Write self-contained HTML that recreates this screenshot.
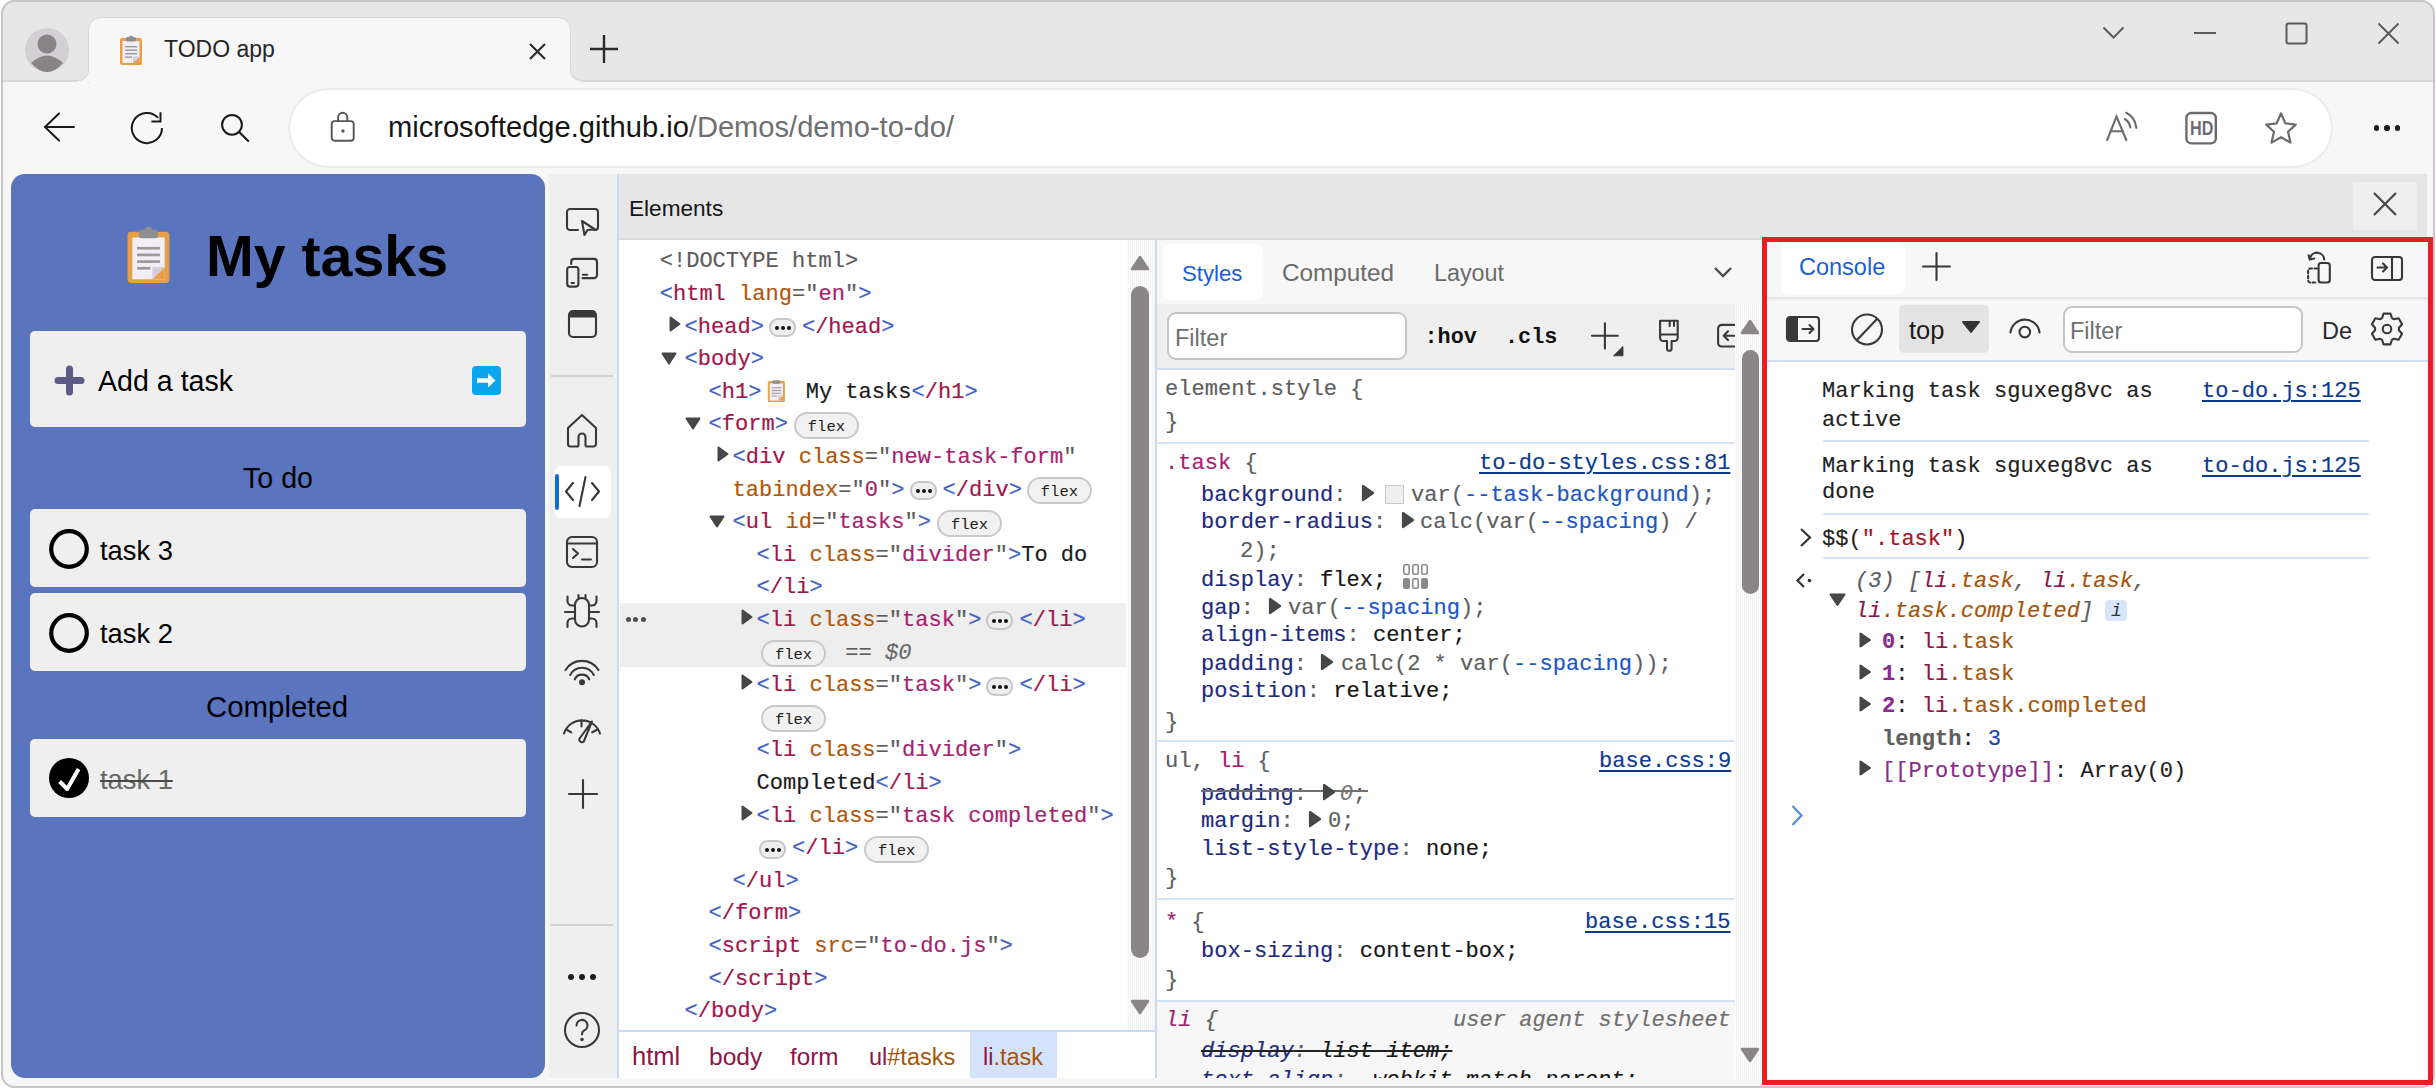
<!DOCTYPE html>
<html><head><meta charset="utf-8"><title>TODO app</title>
<style>
html,body{margin:0;padding:0;}
body{width:2436px;height:1088px;position:relative;overflow:hidden;background:#fff;font-family:"Liberation Sans",sans-serif;}
.a{position:absolute;}
.t{white-space:pre;}
.row{position:absolute;white-space:pre;font-family:"Liberation Mono",monospace;font-size:22.05px;line-height:22px;display:flex;align-items:center;height:22px;-webkit-text-stroke:0.18px currentColor;}
.tg{color:#a1154a}.br{color:#3f62c9}.at{color:#b0560a}.av{color:#a4236e}.q{color:#5c5c5c}.bk{color:#1b1b1b}
.badge{display:inline-block;box-sizing:border-box;border:2px solid #cbc7ca;background:#f1f1f1;border-radius:14px;height:27px;width:65px;position:relative;margin-left:6px;margin-right:6px;}
.badge span{-webkit-text-stroke:0;position:absolute;left:0;right:0;top:4px;text-align:center;font-size:15.5px;line-height:18px;color:#202020;font-family:"Liberation Mono",monospace;}
.ell{display:inline-block;box-sizing:border-box;border:2px solid #c9c5c8;background:#efefef;border-radius:9px;height:19px;width:27px;position:relative;margin-left:5px;margin-right:6px;}
.ell i{position:absolute;top:6px;width:4px;height:4px;border-radius:2px;background:#111;}
</style></head><body>
<div class="a" style="left:0px;top:0px;width:2436px;height:1088px;background:#fff;"></div><div class="a" style="left:1px;top:0px;width:2434px;height:1088px;box-sizing:border-box;border:2px solid #c9c6c9;border-radius:14px;background:#f7f7f7;"></div><div class="a" style="left:3px;top:2px;width:2430px;height:79px;background:#e8e7e8;border-radius:12px 12px 0 0;"></div><div class="a" style="left:3px;top:80px;width:2430px;height:2px;background:#d9d7d9;"></div><div class="a" style="left:89px;top:18px;width:481px;height:64px;background:#f7f7f7;border-radius:12px 12px 0 0;box-shadow:0 0 0 1px #dad8da;"></div><div class="a" style="left:78px;top:68px;width:11px;height:14px;background:#f7f7f7;"></div><div class="a" style="left:77px;top:66px;width:12px;height:15px;box-sizing:border-box;background:#e8e7e8;border-bottom-right-radius:11px;border-right:1.5px solid #d9d7d9;border-bottom:1.5px solid #d9d7d9;"></div><div class="a" style="left:570px;top:68px;width:11px;height:14px;background:#f7f7f7;"></div><div class="a" style="left:570px;top:66px;width:12px;height:15px;box-sizing:border-box;background:#e8e7e8;border-bottom-left-radius:11px;border-left:1.5px solid #d9d7d9;border-bottom:1.5px solid #d9d7d9;"></div><div class="a" style="left:89px;top:78px;width:481px;height:5px;background:#f7f7f7;"></div><svg class="a" style="left:25px;top:28px;" width="44" height="44" viewBox="0 0 44 44"><circle cx="22" cy="22" r="22" fill="#d2d0d4"/><circle cx="22" cy="16" r="9.5" fill="#8a8486"/><path d="M6 35 Q22 20 38 35 Q30 44 22 44 Q14 44 6 35Z" fill="#8a8486"/></svg><svg class="a" style="left:119px;top:35px;" width="24" height="31" viewBox="0 0 24 31"><rect x="1" y="3" width="22" height="27" rx="2" fill="#e8a048"/><rect x="3.5" y="6" width="17" height="22" fill="#f3eef5"/><path d="M14 28 L20.5 21.5 L20.5 28Z" fill="#e8a048"/><path d="M14 28 L14 21.5 L20.5 21.5Z" fill="#d4cfe0"/><rect x="7" y="2" width="10" height="4.5" rx="1.5" fill="#8f8f8f"/><circle cx="12" cy="2.2" r="1.8" fill="#8f8f8f"/><rect x="6" y="11" width="12" height="1.4" fill="#9a9a9a"/><rect x="6" y="14.5" width="12" height="1.4" fill="#9a9a9a"/><rect x="6" y="18" width="12" height="1.4" fill="#9a9a9a"/><rect x="6" y="21.5" width="7" height="1.4" fill="#9a9a9a"/></svg><div class="a t" style="left:164px;top:38.45px;font-family:'Liberation Sans', sans-serif;font-size:23px;line-height:23px;color:#262626;font-weight:400;font-style:normal;">TODO app</div><svg class="a" style="left:528px;top:42px;" width="19" height="19" viewBox="0 0 19 19"><path d="M2 2L17 17M17 2L2 17" stroke="#2b2b2b" stroke-width="2.2" fill="none"/></svg><svg class="a" style="left:589px;top:34px;" width="30" height="30" viewBox="0 0 30 30"><path d="M15 1V29M1 15H29" stroke="#2b2b2b" stroke-width="2.4" fill="none"/></svg><svg class="a" style="left:2102px;top:26px;" width="23" height="14" viewBox="0 0 23 14"><path d="M1.5 1.5L11.5 11.5L21.5 1.5" stroke="#5c5a5c" stroke-width="2" fill="none"/></svg><div class="a" style="left:2194px;top:32px;width:22px;height:2px;background:#5c5a5c;"></div><svg class="a" style="left:2285px;top:22px;" width="23" height="23" viewBox="0 0 23 23"><rect x="1.5" y="1.5" width="20" height="20" rx="2" stroke="#5c5a5c" stroke-width="2" fill="none"/></svg><svg class="a" style="left:2377px;top:22px;" width="23" height="23" viewBox="0 0 23 23"><path d="M1.5 1.5L21.5 21.5M21.5 1.5L1.5 21.5" stroke="#5c5a5c" stroke-width="2" fill="none"/></svg><svg class="a" style="left:41px;top:110px;" width="37" height="34" viewBox="0 0 37 34"><path d="M33 17H4.5M18 3.5L4 17L18 30.5" stroke="#1a1a1a" stroke-width="2" fill="none" stroke-linejoin="miter" stroke-linecap="round"/></svg><svg class="a" style="left:129px;top:110px;" width="37" height="36" viewBox="0 0 37 36"><path d="M33 18A15.1 15.1 0 1 1 29.1 7.9" stroke="#1a1a1a" stroke-width="2" fill="none"/><path d="M22.4 11.6H31.5V2.3" stroke="#1a1a1a" stroke-width="2" fill="none"/></svg><svg class="a" style="left:219px;top:113px;" width="32" height="32" viewBox="0 0 32 32"><circle cx="13" cy="11.8" r="9.9" stroke="#1a1a1a" stroke-width="2" fill="none"/><path d="M20.6 19.4L29.2 28" stroke="#1a1a1a" stroke-width="2.1" stroke-linecap="round"/></svg><div class="a" style="left:290px;top:90px;width:2041px;height:76px;box-sizing:border-box;background:#fff;border-radius:39px;box-shadow:0 0 0 2px #ececec;"></div><svg class="a" style="left:329px;top:110px;" width="28" height="33" viewBox="0 0 28 33"><rect x="2.7" y="11.1" width="22" height="19.6" rx="3" stroke="#555" stroke-width="1.9" fill="none"/><path d="M9.1 11.1V7.4A4.6 4.6 0 0 1 18.3 7.4V11.1" stroke="#555" stroke-width="1.9" fill="none"/><circle cx="14" cy="21" r="1.7" fill="#555"/></svg><div class="a t" style="left:388px;top:113.27px;font-family:'Liberation Sans', sans-serif;font-size:29.1px;line-height:29.1px;color:#151515;font-weight:400;font-style:normal;">microsoftedge.github.io<span style="color:#6f6f6f">/Demos/demo-to-do/</span></div><svg class="a" style="left:2104px;top:110px;" width="38" height="34" viewBox="0 0 38 34"><path d="M3.2 30L12.5 6.5L22.3 30M6.2 21.2H19" stroke="#6e6b6e" stroke-width="2.1" fill="none" stroke-linecap="round"/><path d="M20.8 9Q25.5 12 26.4 17.5" stroke="#6e6b6e" stroke-width="2.1" fill="none" stroke-linecap="round"/><path d="M22.3 2.8Q31 7 32.4 18" stroke="#6e6b6e" stroke-width="2.1" fill="none" stroke-linecap="round"/></svg><svg class="a" style="left:2184px;top:111px;" width="34" height="34" viewBox="0 0 34 34"><rect x="2.4" y="2" width="29.4" height="30.4" rx="5" stroke="#6e6b6e" stroke-width="2.4" fill="none"/><text x="0" y="23.6" text-anchor="middle" font-family="Liberation Sans" font-weight="700" font-size="19.5" fill="#6e6b6e" transform="translate(17.8 0) scale(0.83 1)">HD</text></svg><svg class="a" style="left:2262.7px;top:111px;" width="36" height="34" viewBox="0 0 36 34"><path d="M18 2.3L22.3 12.3L32.8 13.6L25 20.8L27.5 31.6L18 26.2L8.5 31.6L11 20.8L3.2 13.6L13.7 12.3Z" stroke="#6e6b6e" stroke-width="2.2" fill="none" stroke-linejoin="round"/></svg><div class="a" style="left:2373.7999999999997px;top:125.3px;width:5.6px;height:5.6px;border-radius:2.8px;background:#1c1c1c"></div><div class="a" style="left:2384.2px;top:125.3px;width:5.6px;height:5.6px;border-radius:2.8px;background:#1c1c1c"></div><div class="a" style="left:2394.6px;top:125.3px;width:5.6px;height:5.6px;border-radius:2.8px;background:#1c1c1c"></div><div class="a" style="left:11px;top:174px;width:534px;height:904px;background:#5a74be;border-radius:14px;"></div><svg class="a" style="left:125px;top:226px;" width="47" height="59" viewBox="0 0 24 31"><rect x="1" y="3" width="22" height="27" rx="2" fill="#e8a048"/><rect x="3.5" y="6" width="17" height="22" fill="#f3eef5"/><path d="M14 28 L20.5 21.5 L20.5 28Z" fill="#e8a048"/><path d="M14 28 L14 21.5 L20.5 21.5Z" fill="#d4cfe0"/><rect x="7" y="2" width="10" height="4.5" rx="1.5" fill="#8f8f8f"/><circle cx="12" cy="2.2" r="1.8" fill="#8f8f8f"/><rect x="6" y="11" width="12" height="1.4" fill="#9a9a9a"/><rect x="6" y="14.5" width="12" height="1.4" fill="#9a9a9a"/><rect x="6" y="18" width="12" height="1.4" fill="#9a9a9a"/><rect x="6" y="21.5" width="7" height="1.4" fill="#9a9a9a"/></svg><div class="a t" style="left:206px;top:227.80px;font-family:'Liberation Sans', sans-serif;font-size:57.3px;line-height:57.3px;color:#000;font-weight:700;font-style:normal;">My tasks</div><div class="a" style="left:30px;top:331px;width:496px;height:96px;background:#efefef;border-radius:5px;"></div><svg class="a" style="left:54px;top:365px;" width="31" height="31" viewBox="0 0 31 31"><path d="M15.5 4V27M4 15.5H27" stroke="#5b5b88" stroke-width="7" stroke-linecap="round"/></svg><div class="a t" style="left:98px;top:366.69px;font-family:'Liberation Sans', sans-serif;font-size:28.6px;line-height:28.6px;color:#000;font-weight:400;font-style:normal;">Add a task</div><div class="a" style="left:472px;top:366px;width:29px;height:29px;background:#0aa5ec;border-radius:4px;"></div><svg class="a" style="left:472px;top:366px;" width="29" height="29" viewBox="0 0 29 29"><path d="M5 14.5H17" stroke="#fff" stroke-width="4.5"/><path d="M16 7.5L23.5 14.5L16 21.5Z" fill="#fff"/></svg><div class="a t" style="left:243px;top:463.69px;font-family:'Liberation Sans', sans-serif;font-size:28.6px;line-height:28.6px;color:#000;font-weight:400;font-style:normal;">To do</div><div class="a" style="left:30px;top:509px;width:496px;height:78px;background:#efefef;border-radius:5px;"></div><div class="a" style="left:30px;top:593px;width:496px;height:78px;background:#efefef;border-radius:5px;"></div><svg class="a" style="left:49px;top:529px;" width="40" height="40" viewBox="0 0 40 40"><circle cx="20" cy="20" r="17.8" stroke="#000" stroke-width="4.2" fill="none"/></svg><div class="a t" style="left:100px;top:537.29px;font-family:'Liberation Sans', sans-serif;font-size:27.3px;line-height:27.3px;color:#000;font-weight:400;font-style:normal;">task 3</div><svg class="a" style="left:49px;top:613px;" width="40" height="40" viewBox="0 0 40 40"><circle cx="20" cy="20" r="17.8" stroke="#000" stroke-width="4.2" fill="none"/></svg><div class="a t" style="left:100px;top:620.29px;font-family:'Liberation Sans', sans-serif;font-size:27.3px;line-height:27.3px;color:#000;font-weight:400;font-style:normal;">task 2</div><div class="a t" style="left:206px;top:692.01px;font-family:'Liberation Sans', sans-serif;font-size:29.4px;line-height:29.4px;color:#000;font-weight:400;font-style:normal;">Completed</div><div class="a" style="left:30px;top:739px;width:496px;height:78px;background:#efefef;border-radius:5px;"></div><svg class="a" style="left:49px;top:758px;" width="40" height="40" viewBox="0 0 40 40"><circle cx="20" cy="20" r="20" fill="#000"/><path d="M10.6 23.5L18.2 31L29.6 11" stroke="#fff" stroke-width="4" fill="none" stroke-linejoin="round"/></svg><div class="a t" style="left:100px;top:766.29px;font-family:'Liberation Sans', sans-serif;font-size:27.3px;line-height:27.3px;color:#6a6a6a;font-weight:400;font-style:normal;"><span style="text-decoration:line-through;text-decoration-thickness:2px;text-decoration-color:#4a4a4a">task 1</span></div><div class="a" style="left:549px;top:174px;width:68px;height:904px;background:#efefef;"></div><div class="a" style="left:617px;top:174px;width:2px;height:904px;background:#c9daf4;"></div><svg class="a" style="left:565px;top:207px;" width="35" height="30" viewBox="0 0 35 30"><path d="M13 23H5A3 3 0 0 1 2 20V5A3 3 0 0 1 5 2H30A3 3 0 0 1 33 5V20A3 3 0 0 1 30 23" stroke="#383838" stroke-width="2.1" fill="none" stroke-linecap="round" stroke-linejoin="round"/><path d="M17 14L19.5 28L22.5 23L30 22.5Z" stroke="#383838" stroke-width="2.1" fill="none" stroke-linecap="round" stroke-linejoin="round"/></svg><svg class="a" style="left:565px;top:257px;" width="35" height="32" viewBox="0 0 35 32"><path d="M6.2 7V4.9A3 3 0 0 1 9.2 1.9H29A3 3 0 0 1 32 4.9V18.1A3 3 0 0 1 29 21.1H17.5" stroke="#383838" stroke-width="2.1" fill="none" stroke-linecap="round" stroke-linejoin="round"/><rect x="2.2" y="10" width="11.2" height="19.6" rx="2.5" stroke="#383838" stroke-width="2.1" fill="none" stroke-linecap="round" stroke-linejoin="round"/><path d="M6.6 26H9M18 17.7H22.2" stroke="#383838" stroke-width="2.1" fill="none" stroke-linecap="round" stroke-linejoin="round"/></svg><svg class="a" style="left:567px;top:309px;" width="31" height="30" viewBox="0 0 31 30"><rect x="2" y="2" width="27" height="26" rx="4" stroke="#383838" stroke-width="2.1" fill="none" stroke-linecap="round" stroke-linejoin="round"/><path d="M3 4.5A3 3 0 0 1 6 2.5H25A3 3 0 0 1 28 4.5V8.5H3Z" fill="#383838"/></svg><div class="a" style="left:551px;top:375px;width:62px;height:2px;background:#d0d0d0;"></div><svg class="a" style="left:565px;top:413px;" width="34" height="35" viewBox="0 0 34 35"><path d="M3 15L17 2L31 15V31A2.5 2.5 0 0 1 28.5 33.5H22A1.5 1.5 0 0 1 20.5 32V24A3.5 3.5 0 0 0 13.5 24V32A1.5 1.5 0 0 1 12 33.5H5.5A2.5 2.5 0 0 1 3 31Z" stroke="#383838" stroke-width="2.1" fill="none" stroke-linecap="round" stroke-linejoin="round"/></svg><div class="a" style="left:555px;top:466px;width:56px;height:52px;background:#fff;border-radius:6px;"></div><div class="a" style="left:555px;top:474px;width:4px;height:36px;background:#0f6cd1;border-radius:2px;"></div><svg class="a" style="left:563px;top:474px;" width="39" height="35" viewBox="0 0 39 35"><path d="M10 9L3 17.5L10 26M29 9L36 17.5L29 26M22.5 3L16.5 32" stroke="#383838" stroke-width="2.1" fill="none" stroke-linecap="round" stroke-linejoin="round"/></svg><svg class="a" style="left:565px;top:535px;" width="34" height="34" viewBox="0 0 34 34"><rect x="2" y="2" width="30" height="30" rx="5" stroke="#383838" stroke-width="2.1" fill="none" stroke-linecap="round" stroke-linejoin="round"/><path d="M2.5 8.5H31.5M8 14L13 18.5L8 23M17 24.5H26" stroke="#383838" stroke-width="2.1" fill="none" stroke-linecap="round" stroke-linejoin="round"/></svg><svg class="a" style="left:560px;top:590px;" width="44" height="42" viewBox="0 0 44 42"><rect x="15" y="8" width="14" height="28.5" rx="7" stroke="#383838" stroke-width="2.1" fill="none" stroke-linecap="round" stroke-linejoin="round"/><path d="M18.5 8V5M25.5 8V5M15 22H5M29 22H39M15 15.5H12A4.5 4.5 0 0 1 7.5 11V6.5M29 15.5H32A4.5 4.5 0 0 0 36.5 11V6.5M15 28.5H12A4.5 4.5 0 0 0 7.5 33V37M29 28.5H32A4.5 4.5 0 0 1 36.5 33V37" stroke="#383838" stroke-width="2.1" fill="none" stroke-linecap="round" stroke-linejoin="round"/></svg><svg class="a" style="left:560px;top:655px;" width="44" height="34" viewBox="0 0 44 34"><path d="M5.5 15A19.5 19.5 0 0 1 38.5 15M10.2 20A13.2 13.2 0 0 1 33.8 20M14.8 24.4A7.8 7.8 0 0 1 29.2 24.4" stroke="#383838" stroke-width="2.1" fill="none" stroke-linecap="round" stroke-linejoin="round"/><circle cx="22" cy="27.2" r="3" fill="#383838"/></svg><svg class="a" style="left:560px;top:715px;" width="44" height="32" viewBox="0 0 44 32"><path d="M4 18.5A18.9 18.9 0 0 1 40 18.5M21.5 5V11.5M6.5 14.5L11.2 17.3M37.5 14.5L32.2 17.3" stroke="#383838" stroke-width="2.1" fill="none" stroke-linecap="round" stroke-linejoin="round"/><path d="M31.9 6.5L19.2 24A2.8 2.8 0 0 0 23.8 26.5Z" stroke="#383838" stroke-width="2.1" fill="none" stroke-linecap="round" stroke-linejoin="round"/></svg><svg class="a" style="left:567px;top:778px;" width="32" height="32" viewBox="0 0 32 32"><path d="M16 2V30M2 16H30" stroke="#383838" stroke-width="2.1" fill="none" stroke-linecap="round" stroke-linejoin="round"/></svg><div class="a" style="left:551px;top:924px;width:62px;height:2px;background:#d0d0d0;"></div><div class="a" style="left:568px;top:974px;width:6px;height:6px;border-radius:3px;background:#1e1e1e"></div><div class="a" style="left:579px;top:974px;width:6px;height:6px;border-radius:3px;background:#1e1e1e"></div><div class="a" style="left:590px;top:974px;width:6px;height:6px;border-radius:3px;background:#1e1e1e"></div><svg class="a" style="left:563px;top:1011px;" width="38" height="38" viewBox="0 0 38 38"><circle cx="19" cy="19" r="17" stroke="#383838" stroke-width="2.1" fill="none" stroke-linecap="round" stroke-linejoin="round"/><path d="M13.5 14.5A5.5 5.5 0 1 1 21 19.5C19.5 20.5 19 21.5 19 23.5" stroke="#383838" stroke-width="2.1" fill="none" stroke-linecap="round" stroke-linejoin="round"/><circle cx="19" cy="28.5" r="1.8" fill="#383838"/></svg><div class="a" style="left:619px;top:174px;width:1808px;height:64px;background:#e6e6e6;"></div><div class="a" style="left:619px;top:238px;width:1808px;height:2px;background:#dcdcdc;"></div><div class="a t" style="left:629px;top:197.59px;font-family:'Liberation Sans', sans-serif;font-size:22.6px;line-height:22.6px;color:#161616;font-weight:400;font-style:normal;">Elements</div><div class="a" style="left:2353px;top:182px;width:64px;height:48px;background:#efefef;"></div><svg class="a" style="left:2372px;top:191px;" width="26" height="26" viewBox="0 0 26 26"><path d="M2 2L24 24M24 2L2 24" stroke="#4a4a4a" stroke-width="2.3"/></svg><div class="a" style="left:619px;top:240px;width:508px;height:790px;background:#fff;"></div><div class="a" style="left:620px;top:603px;width:506px;height:64px;background:#eeeeee;"></div><div class="a" style="left:625.5px;top:616.5px;width:5px;height:5px;border-radius:2.5px;background:#505050"></div><div class="a" style="left:633.0px;top:616.5px;width:5px;height:5px;border-radius:2.5px;background:#505050"></div><div class="a" style="left:640.5px;top:616.5px;width:5px;height:5px;border-radius:2.5px;background:#505050"></div><div class="row" style="left:659.7px;top:251.34px;"><span class="q">&lt;!DOCTYPE html&gt;</span></div><div class="row" style="left:659.7px;top:283.94px;"><span class="br">&lt;</span><span class="tg">html</span><span class="bk"> </span><span class="at">lang</span><span class="q">="</span><span class="av">en</span><span class="q">"</span><span class="br">&gt;</span></div><svg class="a" style="left:669px;top:315.8px;" width="12" height="16" viewBox="0 0 12 16"><path d="M1.5 1.5L10.5 8L1.5 14.5Z" fill="#474747" stroke="#474747" stroke-width="2" stroke-linejoin="round"/></svg><div class="row" style="left:684.5px;top:316.54px;"><span class="br">&lt;</span><span class="tg">head</span><span class="br">&gt;</span><span class="ell"><i style="left:4px"></i><i style="left:10px"></i><i style="left:16px"></i></span><span class="br">&lt;</span><span class="tg">/head</span><span class="br">&gt;</span></div><svg class="a" style="left:661px;top:351.90000000000003px;" width="16" height="13" viewBox="0 0 16 13"><path d="M1.5 1.5H14.5L8 11.5Z" fill="#474747" stroke="#474747" stroke-width="2" stroke-linejoin="round"/></svg><div class="row" style="left:684.5px;top:349.14px;"><span class="br">&lt;</span><span class="tg">body</span><span class="br">&gt;</span></div><div class="row" style="left:708.5px;top:381.74px;"><span class="br">&lt;</span><span class="tg">h1</span><span class="br">&gt;</span><svg width="31" height="24" viewBox="0 0 31 24" style="position:relative;top:-2px"><g transform="translate(6,-0.3) scale(0.78)"><rect x="1" y="3" width="22" height="27" rx="2" fill="#e8a048"/><rect x="3.5" y="6" width="17" height="22" fill="#f3eef5"/><path d="M14 28 L20.5 21.5 L20.5 28Z" fill="#e8a048"/><path d="M14 28 L14 21.5 L20.5 21.5Z" fill="#d4cfe0"/><rect x="7" y="2" width="10" height="4.5" rx="1.5" fill="#8f8f8f"/><rect x="6" y="11" width="12" height="1.4" fill="#9a9a9a"/><rect x="6" y="14.5" width="12" height="1.4" fill="#9a9a9a"/><rect x="6" y="18" width="12" height="1.4" fill="#9a9a9a"/><rect x="6" y="21.5" width="7" height="1.4" fill="#9a9a9a"/></g></svg><span class="bk"> My tasks</span><span class="br">&lt;</span><span class="tg">/h1</span><span class="br">&gt;</span></div><svg class="a" style="left:685px;top:417.1px;" width="16" height="13" viewBox="0 0 16 13"><path d="M1.5 1.5H14.5L8 11.5Z" fill="#474747" stroke="#474747" stroke-width="2" stroke-linejoin="round"/></svg><div class="row" style="left:708.5px;top:414.34px;"><span class="br">&lt;</span><span class="tg">form</span><span class="br">&gt;</span><span class="badge" style="margin-left:6px"><span>flex</span></span></div><svg class="a" style="left:717px;top:446.20000000000005px;" width="12" height="16" viewBox="0 0 12 16"><path d="M1.5 1.5L10.5 8L1.5 14.5Z" fill="#474747" stroke="#474747" stroke-width="2" stroke-linejoin="round"/></svg><div class="row" style="left:732.5px;top:446.94px;"><span class="br">&lt;</span><span class="tg">div</span><span class="bk"> </span><span class="at">class</span><span class="q">="</span><span class="av">new-task-form</span><span class="q">"</span></div><div class="row" style="left:732.5px;top:479.54px;"><span class="at">tabindex</span><span class="q">="</span><span class="av">0</span><span class="q">"</span><span class="br">&gt;</span><span class="ell"><i style="left:4px"></i><i style="left:10px"></i><i style="left:16px"></i></span><span class="br">&lt;</span><span class="tg">/div</span><span class="br">&gt;</span><span class="badge" style="margin-left:5px"><span>flex</span></span></div><svg class="a" style="left:709px;top:514.9000000000001px;" width="16" height="13" viewBox="0 0 16 13"><path d="M1.5 1.5H14.5L8 11.5Z" fill="#474747" stroke="#474747" stroke-width="2" stroke-linejoin="round"/></svg><div class="row" style="left:732.5px;top:512.14px;"><span class="br">&lt;</span><span class="tg">ul</span><span class="bk"> </span><span class="at">id</span><span class="q">="</span><span class="av">tasks</span><span class="q">"</span><span class="br">&gt;</span><span class="badge" style="margin-left:6px"><span>flex</span></span></div><div class="row" style="left:756.5px;top:544.74px;"><span class="br">&lt;</span><span class="tg">li</span><span class="bk"> </span><span class="at">class</span><span class="q">="</span><span class="av">divider</span><span class="q">"</span><span class="br">&gt;</span><span class="bk">To do</span></div><div class="row" style="left:756.5px;top:577.34px;"><span class="br">&lt;</span><span class="tg">/li</span><span class="br">&gt;</span></div><svg class="a" style="left:741px;top:609.2px;" width="12" height="16" viewBox="0 0 12 16"><path d="M1.5 1.5L10.5 8L1.5 14.5Z" fill="#474747" stroke="#474747" stroke-width="2" stroke-linejoin="round"/></svg><div class="row" style="left:756.5px;top:609.94px;"><span class="br">&lt;</span><span class="tg">li</span><span class="bk"> </span><span class="at">class</span><span class="q">="</span><span class="av">task</span><span class="q">"</span><span class="br">&gt;</span><span class="ell"><i style="left:4px"></i><i style="left:10px"></i><i style="left:16px"></i></span><span class="br">&lt;</span><span class="tg">/li</span><span class="br">&gt;</span></div><div class="row" style="left:761px;top:642.54px;"><span class="badge" style="margin-left:0px"><span>flex</span></span><span class="q"> == </span><span style="color:#6a6a6a;font-style:italic">$0</span></div><svg class="a" style="left:741px;top:674.4000000000001px;" width="12" height="16" viewBox="0 0 12 16"><path d="M1.5 1.5L10.5 8L1.5 14.5Z" fill="#474747" stroke="#474747" stroke-width="2" stroke-linejoin="round"/></svg><div class="row" style="left:756.5px;top:675.14px;"><span class="br">&lt;</span><span class="tg">li</span><span class="bk"> </span><span class="at">class</span><span class="q">="</span><span class="av">task</span><span class="q">"</span><span class="br">&gt;</span><span class="ell"><i style="left:4px"></i><i style="left:10px"></i><i style="left:16px"></i></span><span class="br">&lt;</span><span class="tg">/li</span><span class="br">&gt;</span></div><div class="row" style="left:761px;top:707.74px;"><span class="badge" style="margin-left:0px"><span>flex</span></span></div><div class="row" style="left:756.5px;top:740.34px;"><span class="br">&lt;</span><span class="tg">li</span><span class="bk"> </span><span class="at">class</span><span class="q">="</span><span class="av">divider</span><span class="q">"</span><span class="br">&gt;</span></div><div class="row" style="left:756.5px;top:772.94px;"><span class="bk">Completed</span><span class="br">&lt;</span><span class="tg">/li</span><span class="br">&gt;</span></div><svg class="a" style="left:741px;top:804.8000000000001px;" width="12" height="16" viewBox="0 0 12 16"><path d="M1.5 1.5L10.5 8L1.5 14.5Z" fill="#474747" stroke="#474747" stroke-width="2" stroke-linejoin="round"/></svg><div class="row" style="left:756.5px;top:805.54px;"><span class="br">&lt;</span><span class="tg">li</span><span class="bk"> </span><span class="at">class</span><span class="q">="</span><span class="av">task completed</span><span class="q">"</span><span class="br">&gt;</span></div><div class="row" style="left:759px;top:838.14px;"><span class="ell" style="margin-left:0"><i style="left:4px"></i><i style="left:10px"></i><i style="left:16px"></i></span><span class="br">&lt;</span><span class="tg">/li</span><span class="br">&gt;</span><span class="badge" style="margin-left:6px"><span>flex</span></span></div><div class="row" style="left:732.5px;top:870.74px;"><span class="br">&lt;</span><span class="tg">/ul</span><span class="br">&gt;</span></div><div class="row" style="left:708.5px;top:903.34px;"><span class="br">&lt;</span><span class="tg">/form</span><span class="br">&gt;</span></div><div class="row" style="left:708.5px;top:935.94px;"><span class="br">&lt;</span><span class="tg">script</span><span class="bk"> </span><span class="at">src</span><span class="q">="</span><span class="av">to-do.js</span><span class="q">"</span><span class="br">&gt;</span></div><div class="row" style="left:708.5px;top:968.54px;"><span class="br">&lt;</span><span class="tg">/script</span><span class="br">&gt;</span></div><div class="row" style="left:684.5px;top:1001.14px;"><span class="br">&lt;</span><span class="tg">/body</span><span class="br">&gt;</span></div><div class="a" style="left:1127px;top:240px;width:28px;height:790px;background:repeating-linear-gradient(90deg,#fcfcfc 0 1px,#f3f3f3 1px 2px);"></div><svg class="a" style="left:1130px;top:255px;" width="20" height="16" viewBox="0 0 20 16"><path d="M10 2L18 14H2Z" fill="#8a8587" stroke="#8a8587" stroke-width="2.5" stroke-linejoin="round"/></svg><div class="a" style="left:1131px;top:286px;width:18px;height:672px;background:#8a8587;border-radius:9px;"></div><svg class="a" style="left:1130px;top:999px;" width="20" height="16" viewBox="0 0 20 16"><path d="M10 14L18 2H2Z" fill="#8a8587" stroke="#8a8587" stroke-width="2.5" stroke-linejoin="round"/></svg><div class="a" style="left:1155px;top:240px;width:2px;height:838px;background:#c9daf4;"></div><div class="a" style="left:619px;top:1030px;width:536px;height:2px;background:#c9daf4;"></div><div class="a" style="left:619px;top:1032px;width:536px;height:46px;background:#fff;"></div><div class="a" style="left:970px;top:1032px;width:87px;height:46px;background:#d3e3fb;"></div><div class="a t" style="left:632px;top:1043.83px;font-family:'Liberation Sans', sans-serif;font-size:25.5px;line-height:25.5px;color:#8c1547;font-weight:400;font-style:normal;">html</div><div class="a t" style="left:709px;top:1044.59px;font-family:'Liberation Sans', sans-serif;font-size:24.6px;line-height:24.6px;color:#8c1547;font-weight:400;font-style:normal;">body</div><div class="a t" style="left:790px;top:1044.85px;font-family:'Liberation Sans', sans-serif;font-size:24.3px;line-height:24.3px;color:#8c1547;font-weight:400;font-style:normal;">form</div><div class="a t" style="left:869px;top:1045.53px;font-family:'Liberation Sans', sans-serif;font-size:23.5px;line-height:23.5px;color:#8c1547;font-weight:400;font-style:normal;">ul<span style="color:#a6540a">#tasks</span></div><div class="a t" style="left:983px;top:1045.53px;font-family:'Liberation Sans', sans-serif;font-size:23.5px;line-height:23.5px;color:#8c1547;font-weight:400;font-style:normal;">li<span style="color:#a6540a">.task</span></div><div class="a" style="left:1157px;top:240px;width:605px;height:64px;background:#f7f7f7;"></div><div class="a" style="left:1163px;top:244px;width:100px;height:56px;background:#fff;border-radius:8px;"></div><div class="a t" style="left:1182px;top:263.13px;font-family:'Liberation Sans', sans-serif;font-size:22.2px;line-height:22.2px;color:#1a5fd6;font-weight:400;font-style:normal;">Styles</div><div class="a t" style="left:1282px;top:261.35px;font-family:'Liberation Sans', sans-serif;font-size:24.3px;line-height:24.3px;color:#6b6b6b;font-weight:400;font-style:normal;">Computed</div><div class="a t" style="left:1434px;top:262.19px;font-family:'Liberation Sans', sans-serif;font-size:23.3px;line-height:23.3px;color:#6b6b6b;font-weight:400;font-style:normal;">Layout</div><svg class="a" style="left:1713px;top:266px;" width="20" height="14" viewBox="0 0 20 14"><path d="M2 2L10 10L18 2" stroke="#4a4a4a" stroke-width="2.3" fill="none"/></svg><div class="a" style="left:1157px;top:304px;width:578px;height:64px;background:#efefef;"></div><div class="a" style="left:1167px;top:312px;width:240px;height:48px;box-sizing:border-box;background:#fff;border:2px solid #c8c3c6;border-radius:9px;"></div><div class="a t" style="left:1175px;top:327.02px;font-family:'Liberation Sans', sans-serif;font-size:23.5px;line-height:23.5px;color:#6f6f6f;font-weight:400;font-style:normal;">Filter</div><div class="a t" style="left:1424.5px;top:327.43px;font-family:'Liberation Mono', monospace;font-size:21.8px;line-height:21.8px;color:#111;font-weight:700;font-style:normal;">:hov</div><div class="a t" style="left:1505px;top:327.43px;font-family:'Liberation Mono', monospace;font-size:21.8px;line-height:21.8px;color:#111;font-weight:700;font-style:normal;">.cls</div><svg class="a" style="left:1589px;top:318px;" width="36" height="40" viewBox="0 0 36 40"><path d="M15.9 5.3V30.6M3 17.7H28.8" stroke="#383838" stroke-width="2.1" fill="none" stroke-linecap="round" stroke-linejoin="round"/><path d="M34 28.4V37.8H24.5Z" fill="#383838" stroke="#383838" stroke-width="0.8" stroke-linejoin="round"/></svg><svg class="a" style="left:1655px;top:316px;" width="28" height="38" viewBox="0 0 28 38"><path d="M5.1 4.7H22.7V22A3 3 0 0 1 19.7 25H16.6V32.5A2.3 2.3 0 0 1 12 32.5V25H8.1A3 3 0 0 1 5.1 22Z M5.1 18.5H22.7 M14.7 5V10 M19 5V10" stroke="#383838" stroke-width="2.1" fill="none" stroke-linecap="round" stroke-linejoin="round"/></svg><svg class="a" style="left:1714px;top:318px;" width="21" height="34" viewBox="0 0 21 34"><path d="M21 6.9H7.6A3.5 3.5 0 0 0 4.1 10.4V25A3.5 3.5 0 0 0 7.6 28.5H21 M9.7 17.7H21 M14 13.3L9.7 17.7L14 22.1" stroke="#383838" stroke-width="2.1" fill="none" stroke-linecap="round" stroke-linejoin="round"/></svg><div class="a" style="left:1157px;top:368px;width:578px;height:2px;background:#cfdff6;"></div><div class="a" style="left:1735px;top:304px;width:27px;height:774px;background:repeating-linear-gradient(90deg,#fcfcfc 0 1px,#f3f3f3 1px 2px);"></div><svg class="a" style="left:1740px;top:319px;" width="20" height="16" viewBox="0 0 20 16"><path d="M10 2L18 14H2Z" fill="#8a8587" stroke="#8a8587" stroke-width="2.5" stroke-linejoin="round"/></svg><div class="a" style="left:1742px;top:350px;width:17px;height:244px;background:#8a8587;border-radius:8.5px;"></div><svg class="a" style="left:1740px;top:1047px;" width="20" height="16" viewBox="0 0 20 16"><path d="M10 14L18 2H2Z" fill="#8a8587" stroke="#8a8587" stroke-width="2.5" stroke-linejoin="round"/></svg><div class="a" style="left:1157px;top:370px;width:578px;height:708px;background:#fff;"></div><div class="row" style="left:1165px;top:378.54px;"><span style="color:#5e5e5e">element.style {</span></div><div class="row" style="left:1165px;top:411.94px;"><span style="color:#5e5e5e">}</span></div><div class="a" style="left:1157px;top:442px;width:578px;height:2px;background:#d3e2f7;"></div><div class="row" style="left:1165px;top:452.84px;"><span style="color:#a4236e">.task</span><span style="color:#5e5e5e"> {</span></div><div class="row" style="left:1479px;top:452.84px;"><span style="color:#0d3a8f;text-decoration:underline;text-underline-offset:3px;text-decoration-thickness:2px">to-do-styles.css:81</span></div><div class="row" style="left:1201px;top:484.74px;"><span style="color:#1d2a7e">background</span><span style="color:#5e5e5e">: </span></div><svg class="a" style="left:1360.5px;top:484.0px;" width="14" height="18" viewBox="0 0 14 18"><path d="M2 2L12 9L2 16Z" fill="#474747" stroke="#474747" stroke-width="2.2" stroke-linejoin="round"/></svg><div class="a" style="left:1385px;top:485px;width:19px;height:19px;box-sizing:border-box;background:#efefef;border:1.5px solid #c9c9c9;"></div><div class="row" style="left:1411px;top:484.74px;"><span style="color:#5e5e5e">var(</span><span style="color:#1a56c8">--task-background</span><span style="color:#5e5e5e">);</span></div><div class="row" style="left:1201px;top:512.04px;"><span style="color:#1d2a7e">border-radius</span><span style="color:#5e5e5e">: </span></div><svg class="a" style="left:1400.5px;top:511.29999999999995px;" width="14" height="18" viewBox="0 0 14 18"><path d="M2 2L12 9L2 16Z" fill="#474747" stroke="#474747" stroke-width="2.2" stroke-linejoin="round"/></svg><div class="row" style="left:1420px;top:512.04px;"><span style="color:#5e5e5e">calc(var(</span><span style="color:#1a56c8">--spacing</span><span style="color:#5e5e5e">) /</span></div><div class="row" style="left:1240px;top:540.74px;"><span style="color:#5e5e5e">2);</span></div><div class="row" style="left:1201px;top:569.54px;"><span style="color:#1d2a7e">display</span><span style="color:#5e5e5e">: </span><span style="color:#151515">flex;</span></div><svg class="a" style="left:1402px;top:563px;" width="27" height="27" viewBox="0 0 27 27"><g fill="none" stroke="#8a8a8a" stroke-width="1.6"><rect x="1.8" y="1.8" width="5.4" height="9.4" rx="1.5"/><rect x="10.8" y="1.8" width="5.4" height="9.4" rx="1.5"/><rect x="19.8" y="1.8" width="5.4" height="9.4" rx="1.5"/><rect x="10.8" y="15.8" width="5.4" height="9.4" rx="1.5"/></g><g fill="#8a8a8a"><rect x="1" y="15" width="7" height="11" rx="2"/><rect x="19" y="15" width="7" height="11" rx="2"/></g></svg><div class="row" style="left:1201px;top:597.84px;"><span style="color:#1d2a7e">gap</span><span style="color:#5e5e5e">: </span></div><svg class="a" style="left:1267.5px;top:597.1px;" width="14" height="18" viewBox="0 0 14 18"><path d="M2 2L12 9L2 16Z" fill="#474747" stroke="#474747" stroke-width="2.2" stroke-linejoin="round"/></svg><div class="row" style="left:1288px;top:597.84px;"><span style="color:#5e5e5e">var(</span><span style="color:#1a56c8">--spacing</span><span style="color:#5e5e5e">);</span></div><div class="row" style="left:1201px;top:625.44px;"><span style="color:#1d2a7e">align-items</span><span style="color:#5e5e5e">: </span><span style="color:#151515">center;</span></div><div class="row" style="left:1201px;top:654.04px;"><span style="color:#1d2a7e">padding</span><span style="color:#5e5e5e">: </span></div><svg class="a" style="left:1319.5px;top:653.3px;" width="14" height="18" viewBox="0 0 14 18"><path d="M2 2L12 9L2 16Z" fill="#474747" stroke="#474747" stroke-width="2.2" stroke-linejoin="round"/></svg><div class="row" style="left:1341px;top:654.04px;"><span style="color:#5e5e5e">calc(2 * var(</span><span style="color:#1a56c8">--spacing</span><span style="color:#5e5e5e">));</span></div><div class="row" style="left:1201px;top:680.74px;"><span style="color:#1d2a7e">position</span><span style="color:#5e5e5e">: </span><span style="color:#151515">relative;</span></div><div class="row" style="left:1165px;top:712.44px;"><span style="color:#5e5e5e">}</span></div><div class="a" style="left:1157px;top:740px;width:578px;height:2px;background:#d3e2f7;"></div><div class="row" style="left:1165px;top:751.04px;"><span style="color:#5e5e5e">ul, </span><span style="color:#a4236e">li</span><span style="color:#5e5e5e"> {</span></div><div class="row" style="left:1599px;top:751.04px;"><span style="color:#0d3a8f;text-decoration:underline;text-underline-offset:3px;text-decoration-thickness:2px">base.css:9</span></div><div class="row" style="left:1201px;top:783.74px;"><span style="color:#1d2a7e">padding</span><span style="color:#5e5e5e">:</span><span style="display:inline-block;width:33px"></span><i style="color:#777">0</i><span style="color:#5e5e5e">;</span></div><div class="a" style="left:1201px;top:790.3px;width:167px;height:2px;background:#707070;"></div><svg class="a" style="left:1321.5px;top:783.0px;" width="14" height="18" viewBox="0 0 14 18"><path d="M2 2L12 9L2 16Z" fill="#474747" stroke="#474747" stroke-width="2.2" stroke-linejoin="round"/></svg><div class="row" style="left:1201px;top:811.04px;"><span style="color:#1d2a7e">margin</span><span style="color:#5e5e5e">: </span></div><svg class="a" style="left:1307.5px;top:810.3px;" width="14" height="18" viewBox="0 0 14 18"><path d="M2 2L12 9L2 16Z" fill="#474747" stroke="#474747" stroke-width="2.2" stroke-linejoin="round"/></svg><div class="row" style="left:1328px;top:811.04px;"><span style="color:#5e5e5e">0;</span></div><div class="row" style="left:1201px;top:838.84px;"><span style="color:#1d2a7e">list-style-type</span><span style="color:#5e5e5e">: </span><span style="color:#151515">none;</span></div><div class="row" style="left:1165px;top:867.94px;"><span style="color:#5e5e5e">}</span></div><div class="a" style="left:1157px;top:898px;width:578px;height:2px;background:#d3e2f7;"></div><div class="row" style="left:1165px;top:911.64px;"><span style="color:#a4236e">*</span><span style="color:#5e5e5e"> {</span></div><div class="row" style="left:1585px;top:911.64px;"><span style="color:#0d3a8f;text-decoration:underline;text-underline-offset:3px;text-decoration-thickness:2px">base.css:15</span></div><div class="row" style="left:1201px;top:940.74px;"><span style="color:#1d2a7e">box-sizing</span><span style="color:#5e5e5e">: </span><span style="color:#151515">content-box;</span></div><div class="row" style="left:1165px;top:969.94px;"><span style="color:#5e5e5e">}</span></div><div class="a" style="left:1157px;top:1000px;width:578px;height:2px;background:#d3e2f7;"></div><div class="a" style="left:1157px;top:1002px;width:578px;height:76px;background:#f7f7f7;"></div><div class="row" style="left:1165px;top:1009.64px;font-style:italic;"><span style="color:#a4236e">li</span><span style="color:#5e5e5e"> {</span></div><div class="row" style="left:1453px;top:1009.64px;font-style:italic;"><span style="color:#6f6f6f">user agent stylesheet</span></div><div class="row" style="left:1201px;top:1041.24px;font-style:italic;"><span style="text-decoration:line-through;text-decoration-color:#222;text-decoration-thickness:2px"><span style="color:#1d2a7e">display</span><span style="color:#5e5e5e">: </span><span style="color:#151515">list-item;</span></span></div><div class="row" style="left:1201px;top:1070.24px;font-style:italic;"><span style="text-decoration:line-through;text-decoration-color:#222;text-decoration-thickness:2px"><span style="color:#1d2a7e">text-align</span><span style="color:#5e5e5e">: </span><span style="color:#151515">-webkit-match-parent;</span></span></div><div class="a" style="left:1157px;top:1078px;width:605px;height:10px;background:#f7f7f7;"></div><div class="a" style="left:1762px;top:240px;width:666px;height:838px;background:#fff;"></div><div class="a" style="left:1762px;top:240px;width:666px;height:58px;background:#f7f7f7;"></div><div class="a" style="left:1781px;top:243px;width:124px;height:51px;background:#fff;border-radius:8px;"></div><div class="a t" style="left:1799px;top:255.53px;font-family:'Liberation Sans', sans-serif;font-size:23.5px;line-height:23.5px;color:#1a5fd6;font-weight:400;font-style:normal;">Console</div><svg class="a" style="left:1921px;top:251px;" width="31" height="31" viewBox="0 0 31 31"><path d="M15.5 2V29M2 15.5H29" stroke="#383838" stroke-width="2.1" fill="none" stroke-linecap="round" stroke-linejoin="round"/></svg><svg class="a" style="left:2305px;top:250px;" width="29" height="36" viewBox="0 0 29 36"><rect x="13.6" y="13" width="11.2" height="19.5" rx="2.5" stroke="#383838" stroke-width="2.1" fill="none" stroke-linecap="round" stroke-linejoin="round" stroke="#1e1e1e"/><path d="M12 18.5H5.6A2.5 2.5 0 0 0 3.1 21V30A2.5 2.5 0 0 0 5.6 32.5H12" stroke="#383838" stroke-width="2.1" fill="none" stroke-linecap="round" stroke-linejoin="round" stroke="#1e1e1e" stroke-dasharray="2.6 2.4" stroke-linecap="butt"/><path d="M19.2 9.5A7.2 7.2 0 0 0 5 8.2" stroke="#383838" stroke-width="2.1" fill="none" stroke-linecap="round" stroke-linejoin="round" stroke="#1e1e1e"/><path d="M3.6 5.2L4.8 9.6L9.2 8.6" stroke="#383838" stroke-width="2.1" fill="none" stroke-linecap="round" stroke-linejoin="round" stroke="#1e1e1e"/></svg><svg class="a" style="left:2369px;top:255px;" width="36" height="27" viewBox="0 0 36 27"><rect x="3" y="2" width="30" height="23" rx="3" stroke="#383838" stroke-width="2.1" fill="none" stroke-linecap="round" stroke-linejoin="round" stroke="#1e1e1e" stroke-width="2.3"/><path d="M23 2V25M8.5 12.5H17.5M14 8.5L18 12.5L14 16.5" stroke="#383838" stroke-width="2.1" fill="none" stroke-linecap="round" stroke-linejoin="round" stroke="#1e1e1e" stroke-width="2.3"/></svg><div class="a" style="left:1767px;top:297px;width:661px;height:4px;background:linear-gradient(#e0e0e0,#f3f3f3);"></div><div class="a" style="left:1762px;top:300px;width:666px;height:60px;background:#f7f7f7;"></div><div class="a" style="left:1762px;top:360px;width:666px;height:2px;background:#cfdff6;"></div><svg class="a" style="left:1785px;top:315px;" width="36" height="28" viewBox="0 0 36 28"><rect x="2" y="2" width="32" height="24" rx="3" stroke="#383838" stroke-width="2.1" fill="none" stroke-linecap="round" stroke-linejoin="round"/><path d="M3 4A2 2 0 0 1 5 2.5H13V25.5H5A2 2 0 0 1 3 23.5Z" fill="#383838"/><path d="M17.5 14H28M24.5 10L28.5 14L24.5 18" stroke="#383838" stroke-width="2.1" fill="none" stroke-linecap="round" stroke-linejoin="round"/></svg><svg class="a" style="left:1849px;top:312px;" width="36" height="35" viewBox="0 0 36 35"><circle cx="18" cy="17.5" r="15" stroke="#383838" stroke-width="2.1" fill="none" stroke-linecap="round" stroke-linejoin="round" stroke="#555"/><path d="M8 28L28 7" stroke="#383838" stroke-width="2.1" fill="none" stroke-linecap="round" stroke-linejoin="round" stroke="#555"/></svg><div class="a" style="left:1899px;top:305px;width:90px;height:48px;background:#e3e3e3;border-radius:5px;"></div><div class="a t" style="left:1909px;top:317.82px;font-family:'Liberation Sans', sans-serif;font-size:25.5px;line-height:25.5px;color:#1c1c1c;font-weight:400;font-style:normal;">top</div><svg class="a" style="left:1961px;top:320px;" width="20" height="14" viewBox="0 0 20 14"><path d="M2 2H18L10 12Z" fill="#333" stroke="#333" stroke-width="2" stroke-linejoin="round"/></svg><svg class="a" style="left:2008px;top:317px;" width="35" height="24" viewBox="0 0 35 24"><path d="M2.5 15.5A14.6 14.6 0 0 1 31.5 15.5" stroke="#383838" stroke-width="2.1" fill="none" stroke-linecap="round" stroke-linejoin="round" stroke="#555"/><circle cx="16.8" cy="15.1" r="5.3" stroke="#383838" stroke-width="2.1" fill="none" stroke-linecap="round" stroke-linejoin="round" stroke="#555"/></svg><div class="a" style="left:2063px;top:306px;width:240px;height:47px;box-sizing:border-box;background:#fff;border:2px solid #c8c3c6;border-radius:9px;"></div><div class="a t" style="left:2070px;top:320.02px;font-family:'Liberation Sans', sans-serif;font-size:23.5px;line-height:23.5px;color:#6f6f6f;font-weight:400;font-style:normal;">Filter</div><div class="a t" style="left:2322px;top:320.02px;font-family:'Liberation Sans', sans-serif;font-size:23.5px;line-height:23.5px;color:#2a2a2a;font-weight:400;font-style:normal;">De</div><svg class="a" style="left:2369px;top:311px;" width="36" height="36" viewBox="0 0 36 36"><path d="M13.11 7.04 L14.55 2.58 L21.45 2.58 L22.89 7.04 L25.04 8.28 L29.63 7.30 L33.08 13.28 L29.94 16.76 L29.94 19.24 L33.08 22.72 L29.63 28.70 L25.04 27.72 L22.89 28.96 L21.45 33.42 L14.55 33.42 L13.11 28.96 L10.96 27.72 L6.37 28.70 L2.92 22.72 L6.06 19.24 L6.06 16.76 L2.92 13.28 L6.37 7.30 L10.96 8.28Z" stroke="#383838" stroke-width="2.1" fill="none" stroke-linecap="round" stroke-linejoin="round" stroke="#444"/><circle cx="18" cy="18" r="4.3" stroke="#383838" stroke-width="2.1" fill="none" stroke-linecap="round" stroke-linejoin="round" stroke="#444"/></svg><div class="row" style="left:1822px;top:380.74px;"><span style="color:#1f1f1f">Marking task sguxeg8vc as</span></div><div class="row" style="left:1822px;top:409.94px;"><span style="color:#1f1f1f">active</span></div><div class="row" style="left:2202px;top:380.74px;"><span style="color:#0d3a8f;text-decoration:underline;text-underline-offset:3px;text-decoration-thickness:2px">to-do.js:125</span></div><div class="a" style="left:1823px;top:440px;width:546px;height:2px;background:#d3e2f7;"></div><div class="row" style="left:1822px;top:455.54px;"><span style="color:#1f1f1f">Marking task sguxeg8vc as</span></div><div class="row" style="left:1822px;top:482.34px;"><span style="color:#1f1f1f">done</span></div><div class="row" style="left:2202px;top:455.54px;"><span style="color:#0d3a8f;text-decoration:underline;text-underline-offset:3px;text-decoration-thickness:2px">to-do.js:125</span></div><div class="a" style="left:1823px;top:513px;width:546px;height:2px;background:#d3e2f7;"></div><svg class="a" style="left:1799px;top:527px;" width="14" height="21" viewBox="0 0 14 21"><path d="M2 2L11 10.5L2 19" stroke="#333" stroke-width="2.2" fill="none"/></svg><div class="row" style="left:1822px;top:529.04px;"><span style="color:#1f1f1f">$$(</span><span style="color:#a3152a">".task"</span><span style="color:#1f1f1f">)</span></div><div class="a" style="left:1823px;top:557px;width:546px;height:2px;background:#d3e2f7;"></div><svg class="a" style="left:1795px;top:572px;" width="18" height="17" viewBox="0 0 18 17"><path d="M9 2L2.5 8.5L9 15" stroke="#333" stroke-width="2.2" fill="none"/><circle cx="14.5" cy="8.5" r="1.8" fill="#333"/></svg><svg class="a" style="left:1829px;top:593px;" width="17" height="14" viewBox="0 0 17 14"><path d="M1.5 1.5H15.5L8.5 12Z" fill="#474747" stroke="#474747" stroke-width="2" stroke-linejoin="round"/></svg><div class="row" style="left:1855px;top:571.34px;font-style:italic;"><span style="color:#5e5e5e">(3) [</span><span style="color:#8c1547">li</span><span style="color:#a6540a">.task</span><span style="color:#5e5e5e">, </span><span style="color:#8c1547">li</span><span style="color:#a6540a">.task</span><span style="color:#5e5e5e">,</span></div><div class="row" style="left:1855px;top:600.74px;font-style:italic;"><span style="color:#8c1547">li</span><span style="color:#a6540a">.task.completed</span><span style="color:#5e5e5e">]</span></div><div class="a" style="left:2105px;top:600px;width:22px;height:21px;background:#d8e6fb;border-radius:4px;"></div><div class="a t" style="left:2111px;top:602.32px;font-family:'Liberation Mono', monospace;font-size:18px;line-height:18px;color:#333;font-weight:400;font-style:italic;">i</div><svg class="a" style="left:1859px;top:631.8px;" width="13" height="16" viewBox="0 0 13 16"><path d="M1.5 1.5L11 8L1.5 14.5Z" fill="#474747" stroke="#474747" stroke-width="2" stroke-linejoin="round"/></svg><div class="row" style="left:1882px;top:632.04px;"><b style="color:#8a2a8c">0</b><span style="color:#1f1f1f">: </span><span style="color:#8c1547">li</span><span style="color:#a6540a">.task</span></div><svg class="a" style="left:1859px;top:663.9499999999999px;" width="13" height="16" viewBox="0 0 13 16"><path d="M1.5 1.5L11 8L1.5 14.5Z" fill="#474747" stroke="#474747" stroke-width="2" stroke-linejoin="round"/></svg><div class="row" style="left:1882px;top:664.19px;"><b style="color:#8a2a8c">1</b><span style="color:#1f1f1f">: </span><span style="color:#8c1547">li</span><span style="color:#a6540a">.task</span></div><svg class="a" style="left:1859px;top:696.0999999999999px;" width="13" height="16" viewBox="0 0 13 16"><path d="M1.5 1.5L11 8L1.5 14.5Z" fill="#474747" stroke="#474747" stroke-width="2" stroke-linejoin="round"/></svg><div class="row" style="left:1882px;top:696.34px;"><b style="color:#8a2a8c">2</b><span style="color:#1f1f1f">: </span><span style="color:#8c1547">li</span><span style="color:#a6540a">.task.completed</span></div><div class="row" style="left:1882px;top:728.64px;"><b style="color:#5e5e5e">length</b><span style="color:#1f1f1f">: </span><span style="color:#1a45a6">3</span></div><svg class="a" style="left:1859px;top:760.4px;" width="13" height="16" viewBox="0 0 13 16"><path d="M1.5 1.5L11 8L1.5 14.5Z" fill="#474747" stroke="#474747" stroke-width="2" stroke-linejoin="round"/></svg><div class="row" style="left:1882px;top:760.64px;"><span style="color:#8a2a8c">[[Prototype]]</span><span style="color:#1f1f1f">: Array(0)</span></div><svg class="a" style="left:1790px;top:804px;" width="15" height="23" viewBox="0 0 15 23"><path d="M2.5 2L11.5 11.5L2.5 21" stroke="#4a8fd8" stroke-width="2.2" fill="none"/></svg><div class="a" style="left:3px;top:1078px;width:2430px;height:8px;background:#f7f7f7;"></div><div class="a" style="left:1px;top:0px;width:2434px;height:1088px;box-sizing:border-box;border:2px solid #c9c6c9;border-radius:14px;box-shadow:0 0 0 40px #fff;background:transparent;"></div><div class="a" style="left:1762px;top:237px;width:671px;height:848px;box-sizing:border-box;border:5px solid #ec1c24;"></div></body></html>
